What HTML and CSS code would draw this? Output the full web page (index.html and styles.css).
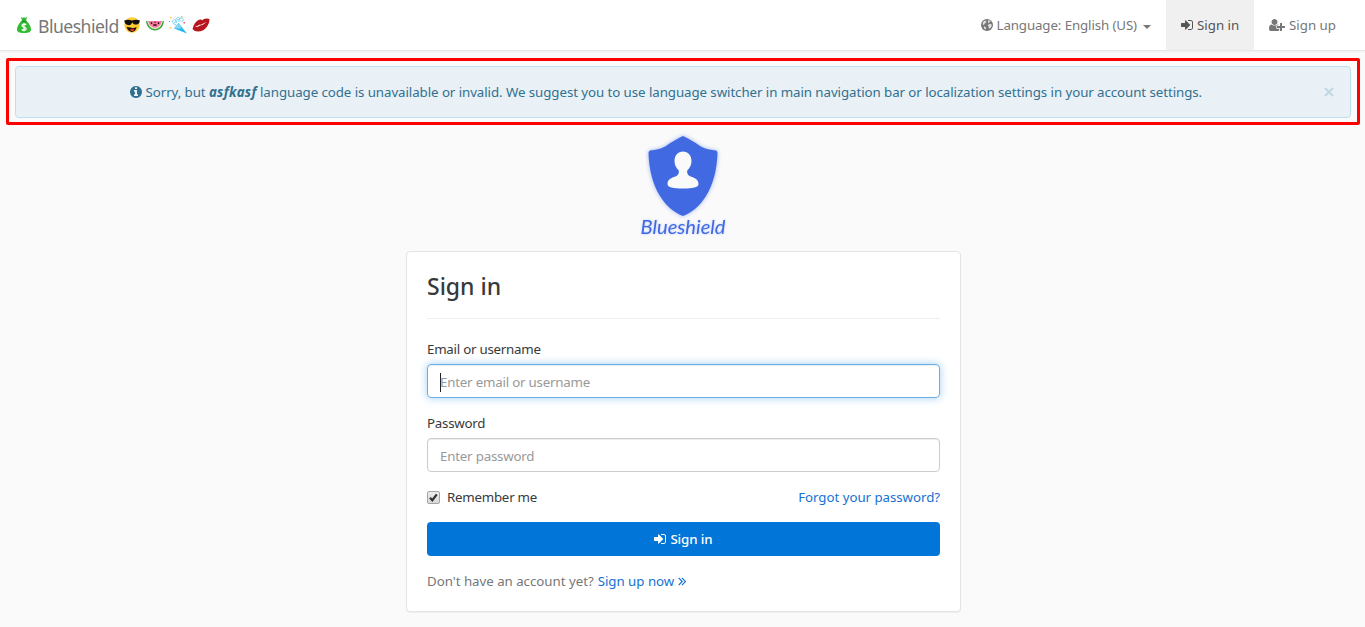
FILE: index.html
```html
<!DOCTYPE html>
<html lang="en">
<head>
<meta charset="utf-8">
<title>Sign in - Blueshield</title>
<link rel="stylesheet" href="styles.css">
</head>
<body>
<svg class="sprite" width="0" height="0">
  <symbol id="sign-in" viewBox="0 0 1536 1792"><path d="M1184 896q0 26-19 45l-544 544q-19 19-45 19t-45-19-19-45v-288h-448q-26 0-45-19t-19-45v-384q0-26 19-45t45-19h448v-288q0-26 19-45t45-19 45 19l544 544q19 19 19 45zm352-352v704q0 119-84.500 203.500t-203.500 84.500h-320q-13 0-22.500-9.500t-9.500-22.500q0-4-1-20t-.5-26.500 3-23.500 10-19.500 20.500-6.500h320q66 0 113-47t47-113v-704q0-66-47-113t-113-47h-312l-11.500-1-11.500-3-8-5.500-7-9-2-13.500q0-4-1-20t-.5-26.500 3-23.500 10-19.500 20.500-6.500h320q119 0 203.500 84.500t84.500 203.500z"/></symbol>
</svg>
<nav class="navbar">
  <a class="brand">
    <svg class="emoji bag" viewBox="0 0 14 16"><path d="M4 0l2 1 1-1 1 1 2-1-1 4H5z M4.500 4h5C12 6 14 9.500 14 12.500c0 2.500-2 3.500-7 3.500s-7-1-7-3.500C0 9.500 2 6 4.500 4z" fill="#3b3"/><path d="M4.500 4.300h5" stroke="#176f20" stroke-width=".7"/><path d="M9.200 7.700C8 6.700 5 6.700 5 8.500c0 1.900 4.200 1.100 4.200 3.200 0 1.900-3 1.900-4.500.8M7 6v8.300" fill="none" stroke="#fff" stroke-width="1.300"/></svg>
    <span class="brand-name">Blueshield</span>
    <svg class="emoji" viewBox="0 0 16 16"><circle cx="8" cy="8" r="7.700" fill="#fc3"/><path d="M.3 3.500C3 2.300 5.500 2.700 8 3.500c2.500-.8 5-1.200 7.700-.2C16 6.500 14 7.600 12 7.600S9 6.700 8.300 5.200C7.500 7.500 6 8.500 4 8 1.500 7.800.5 6 .3 3.500z" fill="#111"/><path d="M2.500 9.500c2 1.300 3.500.5 5 1.300 2 .6 3.500.2 5-1-.2 3.200-2.500 5.400-5 5.100C5 14.500 3 12.500 2.500 9.500z" fill="#211"/><path d="M6 13c1.500-1.500 3.200-1.500 4.300-.3-1 1.600-3.200 1.800-4.300.3z" fill="#e33"/></svg>
    <svg class="emoji melon" viewBox="0 0 18 16"><path d="M0 4h18c-.5 6-4.500 9.500-9 9.500S.5 10 0 4z" fill="#3da53d"/><path d="M1.300 4h15.400c-.8 5-4.200 8-7.700 8S2.100 9 1.300 4z" fill="#e4f6c8"/><path d="M2.200 4h13.600C15 8.500 12 10.800 9 10.800S3 8.500 2.200 4z" fill="#fa78a4"/><path d="M5.500 5.200v1.800M9 4.800v1M12.500 5.200v1.800M7.300 8h3.400" stroke="#311" stroke-width="1.400"/></svg>
    <svg class="emoji party" viewBox="0 0 18 18"><path d="M9.500 7L18 17.500 5 12.500z" fill="#27b9ef"/><path d="M9.300 7.200c2 1 3 3 2.500 5.500L5 12.400z" fill="#82d8f6"/><path d="M7 9C4 8 2 5.500 4.500 4S8 7 5 7M8 7C5.500 3.500 8 .5 10 1.500S9.500 5 8 3.500M10 6c-.5-3 2.500-5.500 4-3.500S12.500 6 11.500 5" fill="none" stroke="#65cff3" stroke-width=".9"/><path d="M1 1h1.500v1.500H1zM12 0h1.500v1.500H12zM1 11h1.500v1.500H1z" fill="#ffc44a"/><path d="M14.500 6H16v1.500h-1.500zM0 5h1v1H0z" fill="#f35c80"/></svg>
    <svg class="emoji lips" viewBox="0 0 18 16"><path d="M.5 12C2 7 4 3.500 8 2.500c1.300-.3 1.800.3 2 1C11.500 1.700 14.500.8 17.500 2 17.500 8 13 14.500 6 14.500c-2.500 0-4-.8-5.500-2.500z" fill="#b5171c"/><path d="M3 10c2-.6 3.800-1.800 5-2.400 1 .7 3-.8 6-2.800-1.500 2.200-3.500 3.500-5 3.400C7 9 5.500 10.100 3 10z" fill="#fff"/></svg>
  </a>
  <div class="nav-links">
    <a class="nav-item language"><svg class="icon globe" viewBox="0 0 12 14"><circle cx="6" cy="7" r="6"/><path d="M1.700 4.700L3.200 3l1.600-.6.7.7-1 .8.7.9-1.500.8-.6 1.100-1.200.3zM6.800 2.200l1.800.4 1.200 1-1.300.3-.9 1.400-.8-.6.5-1zM7.500 6.500l1.800-.7 1.500.9-.4 2-1.600 2-1-.6-.1-1.500-1-.8zM2.800 8.300l1.700.6.7 1-.9 1.500-1.200-.9z" class="globe-cut"/></svg><span class="text">Language: English (US)</span><i class="caret"></i></a>
    <a class="nav-item active"><svg class="icon"><use href="#sign-in"/></svg><span>Sign in</span></a>
    <a class="nav-item signup"><svg class="icon user-plus" viewBox="0 0 2048 1792"><path d="M704 896q-159 0-271.500-112.500t-112.500-271.500 112.500-271.500 271.500-112.500 271.500 112.500 112.500 271.500-112.500 271.500-271.500 112.500zm960 128h352q13 0 22.500 9.500t9.500 22.500v192q0 13-9.500 22.500t-22.500 9.500h-352v352q0 13-9.500 22.500t-22.500 9.500h-192q-13 0-22.500-9.500t-9.500-22.500v-352h-352q-13 0-22.500-9.500t-9.500-22.500v-192q0-13 9.500-22.500t22.500-9.500h352v-352q0-13 9.500-22.500t22.500-9.500h192q13 0 22.500 9.500t9.500 22.500v352zm-736 224q0 52 38 90t90 38h256v238q-68 50-171 50h-874q-121 0-194-69t-73-190q0-53 3.500-103.500t14-109 26.500-108.500 43-97.500 62-81 85.500-53.500 111.500-20q19 0 39 17 79 61 154.500 91.500t164.500 30.500 164.500-30.500 154.500-91.500q20-17 39-17 132 0 217 96h-223q-52 0-90 38t-38 90v192z"/></svg><span>Sign up</span></a>
  </div>
</nav>
<div class="highlight">
  <div class="alert">
    <svg class="icon info" viewBox="128 0 1536 1792"><path d="M1152 1376v-160q0-14-9-23t-23-9h-96v-512q0-14-9-23t-23-9h-320q-14 0-23 9t-9 23v160q0 14 9 23t23 9h96v320h-96q-14 0-23 9t-9 23v160q0 14 9 23t23 9h448q14 0 23-9t9-23zm-128-896v-160q0-14-9-23t-23-9h-192q-14 0-23 9t-9 23v160q0 14 9 23t23 9h192q14 0 23-9t9-23zm640 416q0 209-103 385.500t-279.500 279.500-385.500 103-385.500-103-279.500-279.500-103-385.500 103-385.500 279.500-279.500 385.500-103 385.500 103 279.500 279.500 103 385.500z"/></svg>
    <p class="message">Sorry, but <strong>asfkasf</strong> language code is unavailable or invalid. We suggest you to use language switcher in main navigation bar or localization settings in your account settings.</p>
    <svg class="close" viewBox="0 0 10 10"><path d="M1 1l8 8M9 1l-8 8"/></svg>
  </div>
</div>
<main class="content">
  <div class="logo">
    <svg class="shield" viewBox="0 0 74 86"><path d="M37 3C31 6 25 9 20 13 15 16 9 17 4 17.500Q2.500 18 2.500 20C3 37 7 52 14 63c6 10 15 17 23 20 8-3 17-10 23-20C67 52 71 37 71.500 20q0-2-1.500-2.500C65 17 59 16 54 13 49 9 43 6 37 3z" fill="#4169e1"/><path d="M37 18.500c-5 0-8.500 4-8.500 9.500 0 4 2 7.500 4.300 9.500.5 3-.8 5-3.300 6-5 1.500-8 3.500-8 7.500 0 3.500 6 4.500 15.500 4.500s15.500-1 15.500-4.500c0-4-3-6-8-7.500-2.500-1-3.800-3-3.300-6C43.500 35.500 45.500 32 45.500 28c0-5.500-3.500-9.500-8.500-9.500z" fill="#fafafa"/></svg>
    <svg class="wordmark" viewBox="0 0 96 26"><text x="5.500" y="19" textLength="85" lengthAdjust="spacingAndGlyphs">Blueshield</text></svg>
  </div>
  <form class="card">
    <h1>Sign in</h1>
    <label class="email-label">Email or username</label>
    <div class="field focused"><i class="cursor"></i><span>Enter email or username</span></div>
    <label>Password</label>
    <div class="field"><span>Enter password</span></div>
    <div class="options">
      <div class="remember"><svg class="checkbox" viewBox="0 0 13 13"><defs><linearGradient id="box" x2="0" y2="1"><stop stop-color="#eee"/><stop offset="1" stop-color="#d8d8d8"/></linearGradient></defs><rect x=".5" y=".5" width="12" height="12" rx="1.500" fill="url(#box)" stroke="#a5a5a5"/><path d="M3 6.800l2.300 2.400L9.800 3.300" fill="none" stroke="#333" stroke-width="2.200"/></svg><span>Remember me</span></div>
      <a class="forgot">Forgot your password?</a>
    </div>
    <div class="submit"><svg class="icon"><use href="#sign-in"/></svg><span>Sign in</span></div>
    <p class="register"><span>Don't have an account yet?</span><a>Sign up now</a><svg class="angles" viewBox="0 0 8 9"><path d="M.7.8l3.500 3.700L.7 8.200M4 .8l3.500 3.700L4 8.200"/></svg></p>
  </form>
</main>
</body>
</html>
```
FILE: styles.css
```css
* { box-sizing: border-box; }
body {
  margin: 0;
  height: 627px;
  overflow: hidden;
  background: #fafafa;
  color: #373a3c;
  font: 13.3px/20px "Noto Sans", "Open Sans", sans-serif;
}
p, h1 { margin: 0; }
.sprite { display: block; height: 0; }
.navbar {
  display: flex;
  justify-content: space-between;
  height: 51px;
  background: #fff;
  border-bottom: 1px solid #e7e7e7;
  box-shadow: 0 1px 2px rgba(0,0,0,.05);
  color: #777;
}
.brand { display: flex; align-items: center; padding-left: 17px; }
.brand-name { margin: 0 5px 0 7px; padding-top: 1px; width: 81px; font-size: 17.6px; letter-spacing: -.52px; white-space: nowrap; }
.emoji { width: 16px; height: 16px; margin-right: 6px; }
.bag { width: 14px; margin: 0; }
.melon { width: 18px; margin-right: 5px; }
.party { width: 18px; height: 18px; margin-right: 5px; }
.lips { width: 18px; margin: 0; }
.nav-links { display: flex; }
.nav-item { display: flex; align-items: center; gap: 4px; padding: 0 15px; white-space: nowrap; }
.language .text { letter-spacing: -.11px; }
.icon { width: 12px; height: 14px; fill: currentColor; flex: none; }
.globe-cut { fill: #e2e2e2; }
.user-plus { width: 16px; }
.caret { margin: 3px 0 0 2px; border: 4px solid transparent; border-top-color: #777; border-bottom: 0; }
.active { width: 88px; background: #f0f0f0; color: #555; }
.signup { width: 111px; }
.highlight {
  width: 1354px;
  height: 67px;
  margin: 7px 0 0 6px;
  padding: 5px 6px;
  border: 3px solid #f00;
  border-radius: 2px;
}
.alert {
  display: flex;
  align-items: center;
  height: 52px;
  padding: 0 21px 0 114px;
  background: #e9f1f7;
  border: 1px solid #bce0f0;
  border-radius: 4px;
  color: #31708f;
}
.message { margin-left: 3.5px; letter-spacing: -.07px; white-space: nowrap; }
.message strong { font-style: italic; letter-spacing: .25px; }
.close { width: 10px; height: 10px; margin-left: auto; margin-right: -5px; fill: none; stroke: #c3d7e2; stroke-width: 2; }
.content { display: flex; flex-direction: column; align-items: center; margin-left: 2px; }
.logo { display: flex; flex-direction: column; align-items: center; height: 126px; padding-top: 8px; margin-right: 2px; }
.shield { width: 74px; height: 86px; filter: drop-shadow(0 0 2px #9db3f4); }
.wordmark { width: 96px; height: 26px; margin-top: -4px; overflow: visible; filter: drop-shadow(0 0 1px #b8c8fa); }
.wordmark text { fill: #4169e1; font: italic 20px Lato, sans-serif; }
.card {
  width: 555px;
  height: 361px;
  padding: 20px;
  border: 1px solid #e5e5e5;
  border-radius: 4px;
  background: #fff;
  box-shadow: 0 1px 1px rgba(0,0,0,.05);
}
h1 { height: 47px; padding-top: 1px; border-bottom: 1px solid #eee; font-size: 23px; font-weight: 500; line-height: 26px; }
label { display: block; height: 25px; letter-spacing: -.24px; }
.email-label { margin-top: 20px; }
.field {
  display: flex;
  align-items: center;
  height: 34px;
  margin-bottom: 15px;
  padding: 2px 12px 0;
  border: 1px solid #ccc;
  border-radius: 4px;
  box-shadow: inset 0 1px 1px rgba(0,0,0,.075);
  color: #999;
  letter-spacing: -.2px;
}
.focused { border-color: #66afe9; box-shadow: inset 0 1px 1px rgba(0,0,0,.075), 0 0 8px rgba(102,175,233,.6); }
.cursor { width: 1px; height: 19px; margin-right: -1px; background: #222; }
.options { display: flex; justify-content: space-between; align-items: center; height: 20px; }
.remember { display: flex; align-items: center; gap: 7px; letter-spacing: -.24px; }
.checkbox { width: 13px; height: 13px; }
a.forgot, .register a { color: #1572d4; }
a.forgot { letter-spacing: -.05px; }
.submit {
  display: flex;
  align-items: center;
  justify-content: center;
  gap: 4px;
  height: 34px;
  margin: 15px 0;
  border-radius: 4px;
  background: #0275d8;
  color: #fff;
  font-weight: 500;
  letter-spacing: -.1px;
}
.register { display: flex; align-items: center; gap: 4px; color: #777; letter-spacing: -.03px; }
.register a { letter-spacing: -.02px; }
.angles { width: 8px; height: 9px; fill: none; stroke: #1572d4; stroke-width: 1.2; }
```
